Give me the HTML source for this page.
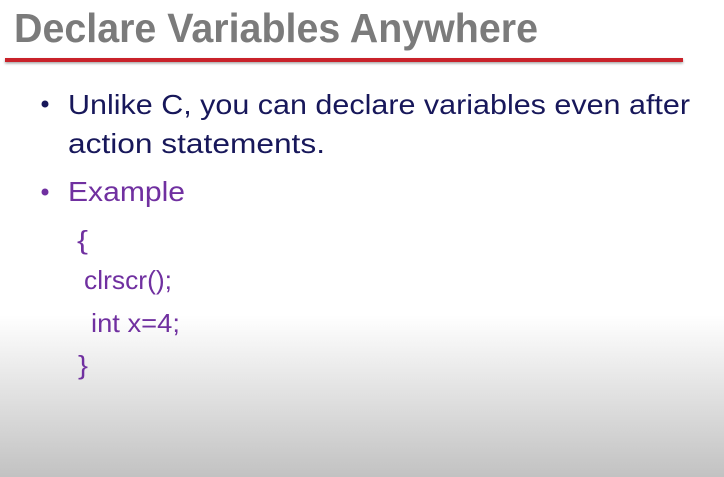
<!DOCTYPE html>
<html><head><meta charset="utf-8"><style>
html,body{margin:0;padding:0;}
body{width:724px;height:477px;overflow:hidden;background:linear-gradient(to bottom,#fff 0,#fff 315px,#c2c2c2 477px);}
svg{position:absolute;left:0;top:0;}
</style></head><body>
<svg width="724" height="477" xmlns="http://www.w3.org/2000/svg">
<defs><filter id="s" x="-5%" y="-100%" width="110%" height="400%"><feDropShadow dx="0" dy="1.5" stdDeviation="1.2" flood-color="#000" flood-opacity="0.35"/></filter></defs>
<text x="14" y="42" font-family="Liberation Sans, sans-serif" font-weight="bold" font-size="41" fill="#7b7b7b" textLength="524" lengthAdjust="spacingAndGlyphs">Declare Variables Anywhere</text>
<rect x="5" y="58" width="678" height="4" fill="#c9202b" filter="url(#s)"/>
<g font-family="Liberation Sans, sans-serif" font-size="28" fill="#17175a">
<circle cx="45" cy="104" r="3.5"/>
<text x="68" y="114" textLength="622" lengthAdjust="spacingAndGlyphs">Unlike C, you can declare variables even after</text>
<text x="68" y="153" textLength="257" lengthAdjust="spacingAndGlyphs">action statements.</text>
</g>
<g font-family="Liberation Sans, sans-serif" fill="#7030a0">
<circle cx="45" cy="192" r="3.5"/>
<text x="68" y="201" font-size="28" textLength="117" lengthAdjust="spacingAndGlyphs">Example</text>
<text x="77" y="249" font-size="26" textLength="11" lengthAdjust="spacingAndGlyphs">{</text>
<text x="84" y="289" font-size="26" textLength="88" lengthAdjust="spacingAndGlyphs">clrscr();</text>
<text x="91" y="332" font-size="26" textLength="89" lengthAdjust="spacingAndGlyphs">int x=4;</text>
<text x="78" y="374" font-size="26" textLength="10" lengthAdjust="spacingAndGlyphs">}</text>
</g>
</svg>
</body></html>
